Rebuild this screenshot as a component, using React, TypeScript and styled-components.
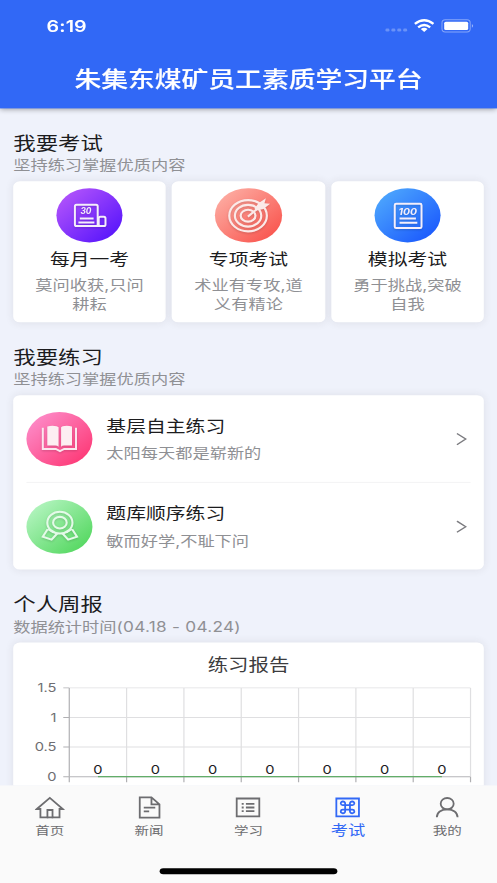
import React from "react";
import styled, { createGlobalStyle } from "styled-components";

const GlobalStyle = createGlobalStyle`
  * { box-sizing: border-box; }
  body { margin: 0; overflow: hidden; background: #fafafa; }
`;

const Viewport = styled.div`
  width: 497px;
  height: 883px;
  overflow: hidden;
`;

const Screen = styled.div`
  width: 414px;
  height: 896px;
  display: flex;
  flex-direction: column;
  transform: scale(1.2005, 0.9855);
  transform-origin: 0 0;
  background: #eff2fb;
  font-family: Inter, "Noto Sans CJK SC", sans-serif;
  color: #1c1c1e;
`;

const Header = styled.header`
  flex: none;
  height: 109.5px;
  background: #3168f6;
  color: #fff;
  box-shadow: 0 2px 5px rgba(0, 0, 0, 0.38);
  z-index: 1;
`;

const StatusBar = styled.div`
  height: 53px;
  padding: 0 19.3px 0 38.8px;
  display: flex;
  align-items: center;
  justify-content: space-between;
`;

const Clock = styled.span`
  font-size: 16.4px;
  font-weight: 600;
  line-height: 20px;
  margin-top: -1px;
  letter-spacing: 0.1px;
`;

const StatusIcons = styled.svg`
  display: block;
  width: 75px;
  height: 16.2px;
`;

const AppTitle = styled.h1`
  margin: 0;
  height: 55px;
  line-height: 54px;
  font-size: 22.3px;
  font-weight: 500;
  text-align: center;
  -webkit-text-stroke: 0.15px #fff;
`;

const Content = styled.main`
  flex: 1;
  min-height: 0;
  overflow: hidden;
  padding: 0 11px;
`;

const SectionHead = styled.div<{ $top: number }>`
  padding-top: ${(p) => p.$top}px;
  height: ${(p) => p.$top + 50}px;
`;

const SectionTitle = styled.h2`
  margin: 0;
  font-size: 18.7px;
  line-height: 23.6px;
  font-weight: 400;
`;

const SectionNote = styled.p`
  margin: 0;
  font-size: 14.35px;
  line-height: 20.6px;
  color: #8f9094;
  white-space: nowrap;
`;

const SectionRange = styled.span`
  letter-spacing: 0.22px;
`;

const Card = styled.div`
  background: #fff;
  border-radius: 5.5px;
  box-shadow: 0 0 8px rgba(60, 40, 40, 0.09);
`;

const ExamGrid = styled.div`
  display: grid;
  grid-template-columns: repeat(3, minmax(0, 1fr));
  gap: 5.3px;
`;

const ExamCard = styled(Card)`
  height: 143.5px;
  padding-top: 7.7px;
  display: flex;
  flex-direction: column;
  align-items: center;
`;

const Medallion = styled.div<{ $from: string; $to: string }>`
  flex: none;
  width: 55.2px;
  height: 55.2px;
  border-radius: 50%;
  background: linear-gradient(135deg, ${(p) => p.$from} 8%, ${(p) => p.$to} 88%);
  svg {
    display: block;
    width: 100%;
    height: 100%;
    filter: drop-shadow(0 1px 1px rgba(0, 0, 0, 0.16));
  }
`;

const ItemTitle = styled.h3`
  margin: 0;
  font-size: 16.5px;
  line-height: 24px;
  font-weight: 400;
  white-space: nowrap;
`;

const ExamTitle = styled(ItemTitle)`
  margin-top: 5px;
`;

const ItemNote = styled.p`
  margin: 0;
  font-size: 14.35px;
  line-height: 20.3px;
  color: #8f9094;
`;

const ExamNote = styled(ItemNote)`
  width: 96px;
  margin-top: 3.4px;
  text-align: center;
  word-break: break-all;
`;

const PracticeCard = styled(Card)`
  padding: 0 11.3px;
`;

const PracticeRow = styled.div`
  height: 88.3px;
  display: flex;
  align-items: center;
  & + & {
    border-top: 1px solid #f3f3f4;
  }
`;

const PracticeText = styled.div`
  flex: 1;
  padding-left: 11.1px;
  display: flex;
  flex-direction: column;
  gap: 6.4px;
`;

const Chevron = styled.svg`
  width: 9px;
  height: 13px;
  margin-right: 3px;
  fill: none;
  stroke: #7c7c80;
  stroke-width: 1.3;
`;

const ReportCard = styled(Card)`
  height: 260px;
  padding-top: 11.2px;
`;

const ReportTitle = styled.h3`
  margin: 0;
  font-size: 17px;
  line-height: 25px;
  font-weight: 400;
  color: #3c3c3e;
  text-align: center;
`;

const Chart = styled.svg`
  display: block;
  width: 392px;
  height: 130px;
  font-size: 12.2px;
`;

const TabBar = styled.nav`
  flex: none;
  height: 98.7px;
  background: #fafafa;
  z-index: 1;
`;

const Tabs = styled.div`
  display: grid;
  grid-template-columns: repeat(5, 1fr);
  height: 84px;
`;

const Tab = styled.a<{ $active?: boolean }>`
  display: flex;
  flex-direction: column;
  align-items: center;
  padding-top: 9.5px;
  color: ${(p) => (p.$active ? "#3168f6" : "#6d6d70")};
  font-size: ${(p) => (p.$active ? 14.35 : 12.1)}px;
  line-height: ${(p) => (p.$active ? 18 : 20)}px;
  svg {
    display: block;
    flex: none;
    width: 25px;
    height: 24.35px;
    margin-bottom: 2px;
    fill: none;
    stroke: currentColor;
    stroke-width: 1.8;
  }
`;

const HomeIndicator = styled.div`
  width: 147.5px;
  height: 5.4px;
  margin: 0 auto;
  border-radius: 3px;
  background: #000;
`;

const stroke = { fill: "none", stroke: "#f4eefb", strokeWidth: 2 };
const scoreText = {
  fill: "#f4eefb",
  textAnchor: "middle" as const,
  fontWeight: 700,
  fontStyle: "italic",
  fontFamily: "Inter, sans-serif",
  lengthAdjust: "spacingAndGlyphs",
};

const box = { viewBox: "0 0 66.3 54.4", preserveAspectRatio: "none" };

const MonthlyIcon = () => (
  <svg {...box}>
    <g {...stroke}>
      <rect x="18.5" y="16.4" width="22.8" height="21.4" rx="1.6" />
      <rect x="42.3" y="28.6" width="6.8" height="9.2" rx="1.6" />
      <path d="M39 37.8h5M23.4 30.2h13.8M22 34.4h16" />
    </g>
    <text x="29.6" y="26.2" fontSize="8.4" textLength="11" {...scoreText}>30</text>
  </svg>
);

const TargetIcon = () => (
  <svg {...box}>
    <g {...stroke} stroke="#fbe9e8" strokeWidth="2.2">
      <ellipse cx="33.2" cy="27.5" rx="18.8" ry="15.6" />
      <ellipse cx="33.2" cy="27.5" rx="13.2" ry="10.9" />
      <ellipse cx="33.2" cy="27.5" rx="7.4" ry="6" />
      <path d="M33 28.4 45 18.5" />
    </g>
    <path d="M39.6 20.6 43.6 15 51 10 49.6 15 55.2 15.6 48.6 20.8 41.6 22.2Z" fill="#fbe9e8" />
  </svg>
);

const MockIcon = () => (
  <svg {...box}>
    <g {...stroke}>
      <rect x="20.2" y="15.5" width="26.8" height="24.4" rx="1.4" />
      <path d="M25 30.2h16.4M25 34.6h17.8" />
    </g>
    <text x="33.2" y="26.4" fontSize="8.6" textLength="18.5" {...scoreText}>100</text>
  </svg>
);

const BookIcon = () => (
  <svg {...box}>
    <path d="M16.4 15.8V37h13l4.2 2.2 4.2-2.2h11.8V15.8" fill="none" stroke="#fbe6ee" strokeWidth="2" />
    <path d="M20.9 14.6q5-1.6 9.4-.2l1.9 1v19.4q-1.3-1.2-3.3-1.2h-8zM45.6 14.6q-5-1.6-9.4-.2l-1.5 1v19.4q1-1.2 3-1.2h7.9z" fill="#fdeef2" />
  </svg>
);

const MedalIcon = () => (
  <svg {...box}>
    <g {...stroke} stroke="#e4fae8" strokeWidth="2.1">
      <ellipse cx="33.5" cy="23" rx="12.6" ry="10.9" />
      <ellipse cx="33.5" cy="23" rx="6.8" ry="5.8" />
      <path d="M21.2 29.6 16.4 37 25.2 40 30.8 33.8 M45.8 29.6 50.6 37 41.8 40 36.2 33.8" />
      <path d="M21.2 29.6 27 33M45.8 29.6 40 33" strokeWidth="1.4" />
    </g>
  </svg>
);

const tabBox = { viewBox: "0 0 30 24", preserveAspectRatio: "none" };

const HomeIcon = () => (
  <svg {...tabBox}>
    <path d="M2 13.7 15 2.6 28 13.7H24.7V22H17.7V14.7H12.6V22H5.6V13.7Z" />
    <path d="M12 22h6.4" />
  </svg>
);
const NewsIcon = () => (
  <svg {...tabBox}>
    <path d="M5.3 2H17l8 7v13.4H5.3ZM17 2v7h8M9.3 12.3h11.5M9.3 16h5.4" />
  </svg>
);
const StudyIcon = () => (
  <svg {...tabBox}>
    <path d="M3.8 3.2h22.6V21H3.8ZM8.8 8.5h2M8.8 12.2h2M8.8 15.9h2M13 8.5h8.5M13 12.2h8.5M13 15.9h8.5" />
  </svg>
);
const ExamIcon = () => (
  <svg {...tabBox}>
    <path d="M3.8 3.2h22.6V21H3.8Z" />
    <path d="M12.6 9.8h4.8v4.6h-4.8ZM12.6 9.8H10.7a2.2 1.8 0 1 1 1.9-1.8ZM17.4 9.8h1.9a2.2 1.8 0 1 0-1.9-1.8ZM12.6 14.4H10.7a2.2 1.8 0 1 0 1.9 1.8ZM17.4 14.4h1.9a2.2 1.8 0 1 1-1.9 1.8Z" />
  </svg>
);
const MineIcon = () => (
  <svg {...tabBox}>
    <ellipse cx="15" cy="8.4" rx="6.5" ry="5.7" />
    <path d="M4.6 22C4.6 17 9 14 15 14S25.4 17 25.4 22" />
  </svg>
);

const exams = [
  { title: "每月一考", note: "莫问收获,只问耕耘", from: "#b455fb", to: "#5a17fb", Icon: MonthlyIcon },
  { title: "专项考试", note: "术业有专攻,道义有精论", from: "#fdaea4", to: "#f95750", Icon: TargetIcon },
  { title: "模拟考试", note: "勇于挑战,突破自我", from: "#4ea8fd", to: "#1c5bfd", Icon: MockIcon },
];

const practices = [
  { title: "基层自主练习", note: "太阳每天都是崭新的", from: "#fd8dca", to: "#fd3b78", Icon: BookIcon },
  { title: "题库顺序练习", note: "敏而好学,不耻下问", from: "#b6f5c2", to: "#56d862", Icon: MedalIcon },
];

const tabs = [
  { label: "首页", Icon: HomeIcon },
  { label: "新闻", Icon: NewsIcon },
  { label: "学习", Icon: StudyIcon },
  { label: "考试", Icon: ExamIcon, active: true },
  { label: "我的", Icon: MineIcon },
];

const plot = { left: 46.7, top: 10, step: 47.75, row: 30.05 };
const plotRight = plot.left + plot.step * 7;
const plotBottom = plot.top + plot.row * 3;

const ReportChart = () => (
  <Chart viewBox="0 0 392 130">
    {["1.5", "1", "0.5", "0"].map((label, i) => {
      const y = plot.top + i * plot.row;
      return (
        <g key={label}>
          <path d={`M${plot.left} ${y}H${plotRight}`} stroke={i === 3 ? "#b5b5b8" : "#dfdfe1"} />
          <path d={`M${plot.left - 5} ${y}H${plot.left}`} stroke="#b0b0b3" />
          <text x="36" y={y + 4.4} textAnchor="end" fill="#6e6e72">{label}</text>
        </g>
      );
    })}
    {Array.from({ length: 8 }, (_, i) => {
      const x = plot.left + i * plot.step;
      return (
        <g key={i}>
          <path d={`M${x} ${plot.top}V${plotBottom}`} stroke={i === 0 ? "#b0b0b3" : "#dfdfe1"} />
          <path d={`M${x} ${plotBottom}v5.5`} stroke="#b0b0b3" />
        </g>
      );
    })}
    <path
      d={`M${plot.left + plot.step / 2} ${plotBottom - 0.2}H${plotRight - plot.step / 2}`}
      stroke="#62ad69"
      strokeWidth="1.3"
    />
    {Array.from({ length: 7 }, (_, i) => (
      <text key={i} x={plot.left + (i + 0.5) * plot.step} y={plotBottom - 3} textAnchor="middle" fill="#1c1c1e">
        0
      </text>
    ))}
  </Chart>
);

export default function App() {
  return (
    <Viewport>
      <GlobalStyle />
      <Screen>
        <Header>
          <StatusBar>
            <Clock>6:19</Clock>
            <StatusIcons viewBox="384 18 90 16" preserveAspectRatio="none" fill="#fff">
              {[385.3, 391.2, 397.1, 403].map((x) => (
                <rect key={x} x={x} y="28.9" width="4" height="3" rx="1.3" opacity="0.28" />
              ))}
              <g fill="none" stroke="#fff" strokeWidth="2.4">
                <path d="M414.7 24.2Q424 16.8 433.3 24.2" />
                <path d="M418 27.6Q424 22.8 430 27.6" />
              </g>
              <path d="M420.6 29.4Q424 26.8 427.4 29.4L424 32.4Z" />
              <rect x="441.8" y="20" width="28.2" height="12.2" rx="3.2" fill="none" stroke="#fff" opacity="0.42" />
              <rect x="444" y="22" width="24" height="8.3" rx="1.6" />
              <path d="M471.7 24.2Q474.2 26 471.7 28Z" opacity="0.5" />
            </StatusIcons>
          </StatusBar>
          <AppTitle>朱集东煤矿员工素质学习平台</AppTitle>
        </Header>

        <Content>
          <SectionHead $top={24}>
            <SectionTitle>我要考试</SectionTitle>
            <SectionNote>坚持练习掌握优质内容</SectionNote>
          </SectionHead>
          <ExamGrid>
            {exams.map(({ title, note, from, to, Icon }) => (
              <ExamCard key={title}>
                <Medallion $from={from} $to={to}><Icon /></Medallion>
                <ExamTitle>{title}</ExamTitle>
                <ExamNote>{note}</ExamNote>
              </ExamCard>
            ))}
          </ExamGrid>

          <SectionHead $top={24.2}>
            <SectionTitle>我要练习</SectionTitle>
            <SectionNote>坚持练习掌握优质内容</SectionNote>
          </SectionHead>
          <PracticeCard>
            {practices.map(({ title, note, from, to, Icon }) => (
              <PracticeRow key={title}>
                <Medallion $from={from} $to={to}><Icon /></Medallion>
                <PracticeText>
                  <ItemTitle>{title}</ItemTitle>
                  <ItemNote>{note}</ItemNote>
                </PracticeText>
                <Chevron viewBox="0 0 9 13"><path d="M.6.8 8 6.5.6 12.2" /></Chevron>
              </PracticeRow>
            ))}
          </PracticeCard>

          <SectionHead $top={24.4}>
            <SectionTitle>个人周报</SectionTitle>
            <SectionNote>数据统计时间<SectionRange>(04.18 - 04.24)</SectionRange></SectionNote>
          </SectionHead>
          <ReportCard>
            <ReportTitle>练习报告</ReportTitle>
            <ReportChart />
          </ReportCard>
        </Content>

        <TabBar>
          <Tabs>
            {tabs.map(({ label, Icon, active }) => (
              <Tab key={label} $active={active}>
                <Icon />
                {label}
              </Tab>
            ))}
          </Tabs>
          <HomeIndicator />
        </TabBar>
      </Screen>
    </Viewport>
  );
}
